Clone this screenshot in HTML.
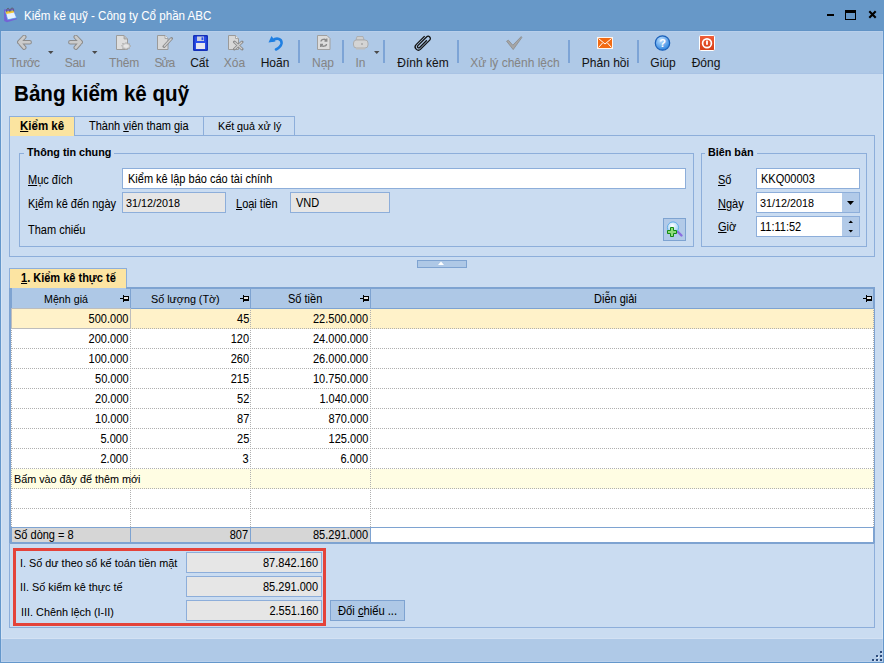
<!DOCTYPE html>
<html><head><meta charset="utf-8"><title>Bảng kiểm kê quỹ</title>
<style>
html,body{margin:0;padding:0;}
body{width:884px;height:663px;position:relative;overflow:hidden;background:#CADCF1;font-family:"Liberation Sans",sans-serif;}
.t{position:absolute;white-space:nowrap;-webkit-text-stroke:0.05px currentColor;}
.b{position:absolute;}
u{text-decoration:underline;text-underline-offset:1px;}
</style></head><body>

<div class="b" style="left:0px;top:0px;width:884px;height:31px;background:#6798C8;"></div>
<svg class="b" style="left:3px;top:6px" width="16" height="17" viewBox="0 0 16 17">
<path d="M1 3.5 L11 2.5 L13.8 13.3 L4 16.2 L1.2 15 Z" fill="#7462d6"/>
<path d="M2.4 5.6 L10.6 4.6 L13.6 11.8 L4.6 13.8 Z" fill="#e6f1ff" stroke="#4a9ee8" stroke-width="0.7"/>
<path d="M2.4 5.6 L10.6 4.6 L11.4 6.6 L3.3 8.1 Z" fill="#f4c93a"/>
<path d="M3.8 6.2 C3.2 1 6.8 1 6.3 5.8 M7.8 5.6 C7.3 0.6 10.8 0.6 10.3 5.4" fill="none" stroke="#5a5a5a" stroke-width="0.9"/>
</svg>
<div class="t" style="left:23.5px;top:9px;font-size:12.200px;line-height:14px;font-weight:normal;color:#fff;transform:scaleX(0.9508);transform-origin:0 0;">Kiểm kê quỹ - Công ty Cổ phần ABC</div>
<div class="b" style="left:827px;top:14px;width:7px;height:2px;background:#000;"></div>
<div class="b" style="left:845px;top:10px;width:11px;height:10px;background:transparent;border:1px solid #000;box-sizing:border-box;border-top-width:3px;"></div>
<svg class="b" style="left:868px;top:10px" width="9" height="9" viewBox="0 0 9 9"><path d="M1.3 1.3 L7.7 7.7 M7.7 1.3 L1.3 7.7" stroke="#000" stroke-width="2.1" stroke-linecap="butt"/></svg>
<div class="b" style="left:0px;top:31px;width:884px;height:43px;background:#AFC9E7;"></div>
<div class="b" style="left:0px;top:30px;width:884px;height:1px;background:#6193C6;"></div>
<div class="b" style="left:0px;top:31px;width:884px;height:1px;background:#B8CFEB;"></div>
<div class="b" style="left:0px;top:73px;width:884px;height:1px;background:#A9C3E4;"></div>
<div class="b" style="left:298px;top:40px;width:2px;height:23px;background:#7DA4D6;"></div>
<div class="b" style="left:342px;top:40px;width:2px;height:23px;background:#7DA4D6;"></div>
<div class="b" style="left:383px;top:40px;width:2px;height:23px;background:#7DA4D6;"></div>
<div class="b" style="left:457px;top:40px;width:2px;height:23px;background:#7DA4D6;"></div>
<div class="b" style="left:568px;top:40px;width:2px;height:23px;background:#7DA4D6;"></div>
<div class="b" style="left:637px;top:40px;width:2px;height:23px;background:#7DA4D6;"></div>
<svg class="b" style="left:48px;top:51px" width="6" height="4" viewBox="0 0 6 4"><path d="M0 0 L5.5 0 L2.75 3 Z" fill="#4a4a4a"/></svg>
<svg class="b" style="left:92px;top:51px" width="6" height="4" viewBox="0 0 6 4"><path d="M0 0 L5.5 0 L2.75 3 Z" fill="#4a4a4a"/></svg>
<svg class="b" style="left:374px;top:51px" width="6" height="4" viewBox="0 0 6 4"><path d="M0 0 L5.5 0 L2.75 3 Z" fill="#4a4a4a"/></svg>
<svg class="b" style="left:17px;top:35px" width="16" height="16" viewBox="0 0 16 16"><path d="M7.2 2 L2.3 7.2 L7.2 12.6 M2.5 7.2 L12.6 7.2" fill="none" stroke="#8c8c8c" stroke-width="4.6" stroke-linecap="round" stroke-linejoin="round"/><path d="M7.2 2 L2.3 7.2 L7.2 12.6 M2.5 7.2 L12.6 7.2" fill="none" stroke="#cbcbcb" stroke-width="2.6" stroke-linecap="round" stroke-linejoin="round"/></svg>
<svg class="b" style="left:67px;top:35px" width="16" height="16" viewBox="0 0 16 16"><g transform="translate(16,0) scale(-1,1)"><path d="M7.2 2 L2.3 7.2 L7.2 12.6 M2.5 7.2 L12.6 7.2" fill="none" stroke="#8c8c8c" stroke-width="4.6" stroke-linecap="round" stroke-linejoin="round"/><path d="M7.2 2 L2.3 7.2 L7.2 12.6 M2.5 7.2 L12.6 7.2" fill="none" stroke="#cbcbcb" stroke-width="2.6" stroke-linecap="round" stroke-linejoin="round"/></g></svg>
<svg class="b" style="left:115px;top:35px" width="17" height="16" viewBox="0 0 17 16"><path d="M1.5 0.5 L9 0.5 L12.5 4 L12.5 14.5 L1.5 14.5 Z" fill="#dedede" stroke="#9c9c9c" stroke-width="1"/><path d="M9 0.5 L9 4 L12.5 4" fill="#bbb" stroke="#9c9c9c" stroke-width="0.8"/><path d="M6.5 11 L8 9.5 L7.5 8.5 L9.5 8.8 L11 7.6 L12.5 8.8 L14.5 8.6 L14.2 10 L16 11 L14.2 12.2 L14.5 13.6 L12.5 13.5 L11 14.6 L9.5 13.5 L7.5 13.6 L8 12.4 Z" fill="#d0d0d0" stroke="#a6a6a6" stroke-width="0.7"/><ellipse cx="11.2" cy="11.1" rx="2.6" ry="1.8" fill="#e6e6e6"/></svg>
<svg class="b" style="left:157px;top:35px" width="16" height="16" viewBox="0 0 16 16"><path d="M0.5 0.5 L8 0.5 L11 3.5 L11 14.5 L0.5 14.5 Z" fill="#d8d8d8" stroke="#9a9a9a" stroke-width="1"/><path d="M8 0.5 L8 3.5 L11 3.5" fill="#eee" stroke="#9a9a9a" stroke-width="0.8"/><path d="M14.5 3.5 L7 11.5" stroke="#8a8a8a" stroke-width="3" stroke-linecap="round"/><path d="M14.5 3.5 L7 11.5" stroke="#d0d0d0" stroke-width="1.4"/></svg>
<svg class="b" style="left:193px;top:35px" width="15" height="16" viewBox="0 0 15 16"><rect x="0.75" y="0.75" width="13.5" height="14.5" rx="0.5" fill="#2a4de8" stroke="#1530b8" stroke-width="1.5"/><rect x="3" y="8" width="9" height="6" fill="#e6e6ee"/><rect x="4" y="1.5" width="7" height="4.5" fill="#c8cde0"/><rect x="8.5" y="2.3" width="1.8" height="2.8" fill="#2a4de8"/></svg>
<svg class="b" style="left:228px;top:35px" width="16" height="16" viewBox="0 0 16 16"><path d="M0.5 0.5 L7.5 0.5 L10.5 3.5 L10.5 14.5 L0.5 14.5 Z" fill="#d8d8d8" stroke="#9a9a9a" stroke-width="1"/><path d="M7.5 0.5 L7.5 3.5 L10.5 3.5" fill="#eee" stroke="#9a9a9a" stroke-width="0.8"/><path d="M6.5 7 L14 14 M14 7 L6.5 14" stroke="#8a8a8a" stroke-width="3" stroke-linecap="round"/><path d="M6.5 7 L14 14 M14 7 L6.5 14" stroke="#cfcfcf" stroke-width="1.2"/></svg>
<svg class="b" style="left:268px;top:35px" width="16" height="16" viewBox="0 0 16 16"><path d="M4.5 5.5 C9 2 14 4 13.5 8.5 C13 11 11 13 8 14.5" fill="none" stroke="#1f7fe2" stroke-width="2.6" stroke-linecap="round"/><path d="M0.5 7.5 L3.5 1 L7.5 6.5 Z" fill="#1f7fe2"/></svg>
<svg class="b" style="left:317px;top:35px" width="14" height="16" viewBox="0 0 14 16"><path d="M0.5 0.5 L10 0.5 L13 3.5 L13 14.5 L0.5 14.5 Z" fill="#dcdcdc" stroke="#a0a0a0" stroke-width="1"/><path d="M4 6.5 C4 4 8.5 3.5 9.5 5.5 M9.8 3.5 L9.8 6 L7.5 6" fill="none" stroke="#8a8a8a" stroke-width="1.3"/><path d="M9.5 9 C9.5 11.5 5 12 4 10 M3.7 12 L3.7 9.5 L6 9.5" fill="none" stroke="#8a8a8a" stroke-width="1.3"/></svg>
<svg class="b" style="left:353px;top:36px" width="16" height="14" viewBox="0 0 16 14"><path d="M4 0.5 L10 0.5 L11 4 L3 4 Z" fill="#cfcfcf" stroke="#a8a8a8" stroke-width="0.8"/><rect x="0.5" y="4" width="14.5" height="8" rx="3" fill="#d4d4d4" stroke="#a8a8a8" stroke-width="0.9"/><path d="M3 12 L12 12 L12 13.5 L3 13.5 Z" fill="#bdbdbd"/><circle cx="9" cy="8" r="0.8" fill="#888"/></svg>
<svg class="b" style="left:412px;top:33px" width="21" height="20" viewBox="0 0 21 20"><path transform="translate(10.5,9.8) rotate(45)" d="M1.3,-4.8 L1.3,5.3 A1.3 1.3 0 0 1 -1.3,5.3 L-1.3,-7 A2.25 2.25 0 0 1 3.2,-7 L3.2,5.8 A3.2 3.2 0 0 1 -3.2,5.8 L-3.2,-6.2" fill="none" stroke="#111" stroke-width="1.3"/></svg>
<svg class="b" style="left:506px;top:36px" width="17" height="15" viewBox="0 0 17 15"><path d="M0.6 5.2 L2.4 4.2 L6.8 9.2 L15.2 0.6 L15.8 1.6 L7.2 13.6 Z" fill="#a6a6a6" stroke="#8a8a8a" stroke-width="0.8" stroke-linejoin="round"/></svg>
<svg class="b" style="left:597px;top:37px" width="16" height="12" viewBox="0 0 16 12"><rect x="0.5" y="0.5" width="15" height="11" fill="#f26a12" stroke="#fff6ee" stroke-width="1"/><path d="M1.5 1.5 L8 7 L14.5 1.5 M1.5 10.5 L5.5 6 M14.5 10.5 L10.5 6" fill="none" stroke="#fff" stroke-width="1"/></svg>
<svg class="b" style="left:654px;top:35px" width="17" height="16" viewBox="0 0 17 16"><defs><radialGradient id="hg" cx="0.4" cy="0.3" r="0.7"><stop offset="0" stop-color="#bfe0ff"/><stop offset="1" stop-color="#2f86e0"/></radialGradient></defs><circle cx="8.5" cy="8" r="7.2" fill="url(#hg)" stroke="#1a5fb8" stroke-width="1.2"/><text x="8.5" y="12.3" text-anchor="middle" font-family="Liberation Sans" font-weight="bold" font-size="11" fill="#fff">?</text></svg>
<svg class="b" style="left:699px;top:35px" width="16" height="16" viewBox="0 0 16 16"><defs><linearGradient id="pg" x1="0" y1="0" x2="0" y2="1"><stop offset="0" stop-color="#f0603a"/><stop offset="1" stop-color="#d63c14"/></linearGradient></defs><rect x="0.5" y="0.5" width="15" height="15" rx="1.2" fill="url(#pg)" stroke="#fff" stroke-width="1"/><circle cx="8" cy="8.3" r="4.4" fill="none" stroke="#fff" stroke-width="1.7"/><rect x="6.6" y="5.2" width="2.8" height="5" fill="url(#pg)"/><rect x="7.1" y="5.6" width="1.8" height="4.2" fill="#fff"/></svg>
<div class="t" style="left:-125.5px;width:300px;text-align:center;top:56px;font-size:12.000px;line-height:14px;font-weight:normal;color:#858585;letter-spacing:-0.6px;">Trước</div>
<div class="t" style="left:-75px;width:300px;text-align:center;top:56px;font-size:12.000px;line-height:14px;font-weight:normal;color:#858585;letter-spacing:-0.3px;">Sau</div>
<div class="t" style="left:-26px;width:300px;text-align:center;top:56px;font-size:12.000px;line-height:14px;font-weight:normal;color:#858585;letter-spacing:-0.2px;">Thêm</div>
<div class="t" style="left:14.300000000000011px;width:300px;text-align:center;top:56px;font-size:12.000px;line-height:14px;font-weight:normal;color:#858585;letter-spacing:-1px;">Sửa</div>
<div class="t" style="left:49.5px;width:300px;text-align:center;top:56px;font-size:12.000px;line-height:14px;font-weight:normal;color:#141414;">Cất</div>
<div class="t" style="left:84.5px;width:300px;text-align:center;top:56px;font-size:12.000px;line-height:14px;font-weight:normal;color:#858585;">Xóa</div>
<div class="t" style="left:125px;width:300px;text-align:center;top:56px;font-size:12.000px;line-height:14px;font-weight:normal;color:#141414;">Hoãn</div>
<div class="t" style="left:173px;width:300px;text-align:center;top:56px;font-size:12.000px;line-height:14px;font-weight:normal;color:#858585;">Nạp</div>
<div class="t" style="left:210.5px;width:300px;text-align:center;top:56px;font-size:12.000px;line-height:14px;font-weight:normal;color:#858585;">In</div>
<div class="t" style="left:273px;width:300px;text-align:center;top:56px;font-size:12.000px;line-height:14px;font-weight:normal;color:#141414;">Đính kèm</div>
<div class="t" style="left:365px;width:300px;text-align:center;top:56px;font-size:12.000px;line-height:14px;font-weight:normal;color:#858585;">Xử lý chênh lệch</div>
<div class="t" style="left:455.5px;width:300px;text-align:center;top:56px;font-size:12.000px;line-height:14px;font-weight:normal;color:#141414;">Phản hồi</div>
<div class="t" style="left:513px;width:300px;text-align:center;top:56px;font-size:12.000px;line-height:14px;font-weight:normal;color:#141414;">Giúp</div>
<div class="t" style="left:556px;width:300px;text-align:center;top:56px;font-size:12.000px;line-height:14px;font-weight:normal;color:#141414;">Đóng</div>
<div class="t" style="left:14px;top:82px;font-size:21.500px;line-height:24px;font-weight:bold;color:#000;transform:scaleX(0.9581);transform-origin:0 0;">Bảng kiểm kê quỹ</div>
<div class="b" style="left:9px;top:135px;width:866px;height:122px;background:transparent;border:1px solid #8DAEDA;box-sizing:border-box;"></div>
<div class="b" style="left:9px;top:116px;width:66px;height:20px;background:#FBE4A0;border:1px solid #8DAEDA;box-sizing:border-box;border-bottom:none;"></div>
<div class="b" style="left:74px;top:116px;width:130px;height:20px;background:#CADCF1;border:1px solid #8DAEDA;box-sizing:border-box;"></div>
<div class="b" style="left:203px;top:116px;width:92px;height:20px;background:#CADCF1;border:1px solid #8DAEDA;box-sizing:border-box;"></div>
<div class="b" style="left:10px;top:135px;width:64px;height:1px;background:#FBE4A0;"></div>
<div class="t" style="left:20px;top:119px;font-size:12.000px;line-height:14px;font-weight:bold;color:#000;transform:scaleX(0.9583);transform-origin:0 0;"><u>K</u>iểm kê</div>
<div class="t" style="left:89px;top:119px;font-size:12.000px;line-height:14px;font-weight:normal;color:#000;transform:scaleX(0.9167);transform-origin:0 0;">Thành <u>v</u>iên tham gia</div>
<div class="t" style="left:218px;top:119px;font-size:11.727px;line-height:14px;font-weight:normal;color:#000;transform:scaleX(0.9167);transform-origin:0 0;">Kết <u>q</u>uả xử lý</div>
<div class="b" style="left:19px;top:153px;width:675px;height:94px;background:transparent;border:1px solid #8DAEDA;box-sizing:border-box;"></div>
<div class="b" style="left:24px;top:146px;width:90px;height:12px;background:#CADCF1;"></div>
<div class="t" style="left:26.5px;top:145px;font-size:11.760px;line-height:14px;font-weight:bold;color:#000;transform:scaleX(0.9167);transform-origin:0 0;">Thông tin chung</div>
<div class="b" style="left:701px;top:153px;width:166px;height:94px;background:transparent;border:1px solid #8DAEDA;box-sizing:border-box;"></div>
<div class="b" style="left:705px;top:146px;width:52px;height:12px;background:#CADCF1;"></div>
<div class="t" style="left:707.5px;top:145px;font-size:11.760px;line-height:14px;font-weight:bold;color:#000;transform:scaleX(0.9167);transform-origin:0 0;">Biên bản</div>
<div class="t" style="left:28.4px;top:173px;font-size:12.000px;line-height:14px;font-weight:normal;color:#000;transform:scaleX(0.9167);transform-origin:0 0;"><u>M</u>ục đích</div>
<div class="b" style="left:122px;top:168px;width:564px;height:21px;background:#fff;border:1px solid #8DAEDA;box-sizing:border-box;"></div>
<div class="t" style="left:127.6px;top:172px;font-size:12.000px;line-height:14px;font-weight:normal;color:#000;transform:scaleX(0.9167);transform-origin:0 0;">Kiểm kê lập báo cáo tài chính</div>
<div class="t" style="left:28.4px;top:197px;font-size:12.000px;line-height:14px;font-weight:normal;color:#000;transform:scaleX(0.9167);transform-origin:0 0;">K<u>i</u>ểm kê đến ngày</div>
<div class="b" style="left:122px;top:192px;width:104px;height:21px;background:#E6E6E6;border:1px solid #8DAEDA;box-sizing:border-box;"></div>
<div class="t" style="left:126px;top:196px;font-size:11.782px;line-height:14px;font-weight:normal;color:#000;transform:scaleX(0.9167);transform-origin:0 0;">31/12/2018</div>
<div class="t" style="left:236px;top:197px;font-size:12.000px;line-height:14px;font-weight:normal;color:#000;transform:scaleX(0.9167);transform-origin:0 0;"><u>L</u>oại tiền</div>
<div class="b" style="left:290px;top:192px;width:100px;height:21px;background:#E6E6E6;border:1px solid #8DAEDA;box-sizing:border-box;"></div>
<div class="t" style="left:296px;top:196px;font-size:12.000px;line-height:14px;font-weight:normal;color:#000;transform:scaleX(0.9167);transform-origin:0 0;">VND</div>
<div class="t" style="left:28.4px;top:223px;font-size:12.000px;line-height:14px;font-weight:normal;color:#000;transform:scaleX(0.9167);transform-origin:0 0;">Tham chiếu</div>
<div class="b" style="left:663px;top:218px;width:23px;height:23px;background:#B2CAE8;border:1px solid #7EA3D1;box-sizing:border-box;"></div>
<svg class="b" style="left:663px;top:218px" width="23" height="23" viewBox="0 0 23 23"><defs><radialGradient id="mg" cx="0.45" cy="0.35" r="0.6"><stop offset="0" stop-color="#ffffff"/><stop offset="1" stop-color="#9fd0f2"/></radialGradient></defs><path d="M14.5 13.5 L18.5 17.5" stroke="#8a6ee0" stroke-width="2.4" stroke-linecap="round"/><circle cx="10" cy="9.5" r="5.6" fill="url(#mg)" stroke="#62aee8" stroke-width="1"/><path d="M7.5,9.5 H10.5 V12.5 H13.5 V15.5 H10.5 V18.5 H7.5 V15.5 H4.5 V12.5 H7.5 Z" fill="#8fdc78" stroke="#138a13" stroke-width="1"/></svg>
<div class="t" style="left:718px;top:173px;font-size:12.000px;line-height:14px;font-weight:normal;color:#000;transform:scaleX(0.9167);transform-origin:0 0;"><u>S</u>ố</div>
<div class="b" style="left:756px;top:168px;width:104px;height:21px;background:#fff;border:1px solid #8DAEDA;box-sizing:border-box;"></div>
<div class="t" style="left:761px;top:172px;font-size:12.000px;line-height:14px;font-weight:normal;color:#000;transform:scaleX(0.9167);transform-origin:0 0;">KKQ00003</div>
<div class="t" style="left:718px;top:197px;font-size:12.000px;line-height:14px;font-weight:normal;color:#000;transform:scaleX(0.9167);transform-origin:0 0;"><u>N</u>gày</div>
<div class="b" style="left:756px;top:192px;width:104px;height:21px;background:#fff;border:1px solid #8DAEDA;box-sizing:border-box;"></div>
<div class="b" style="left:842px;top:193px;width:17px;height:19px;background:#B2CAE8;"></div>
<svg class="b" style="left:847px;top:201px" width="8" height="5" viewBox="0 0 8 5"><path d="M0 0 L7 0 L3.5 4 Z" fill="#000"/></svg>
<div class="t" style="left:760px;top:196px;font-size:11.782px;line-height:14px;font-weight:normal;color:#000;transform:scaleX(0.9167);transform-origin:0 0;">31/12/2018</div>
<div class="t" style="left:718px;top:220px;font-size:12.000px;line-height:14px;font-weight:normal;color:#000;transform:scaleX(0.9167);transform-origin:0 0;"><u>G</u>iờ</div>
<div class="b" style="left:756px;top:216px;width:104px;height:21px;background:#fff;border:1px solid #8DAEDA;box-sizing:border-box;"></div>
<div class="b" style="left:842px;top:217px;width:17px;height:19px;background:#B2CAE8;"></div>
<svg class="b" style="left:848px;top:220px" width="6" height="14" viewBox="0 0 6 14"><path d="M0.5 3 L5 3 L2.75 0.5 Z M0.5 10 L5 10 L2.75 12.5 Z" fill="#000"/></svg>
<div class="t" style="left:760px;top:220px;font-size:12.000px;line-height:14px;font-weight:normal;color:#000;transform:scaleX(0.9167);transform-origin:0 0;">11:11:52</div>
<div class="b" style="left:417px;top:260px;width:50px;height:8px;background:#AEC8E6;border:1px solid #7EA3D1;box-sizing:border-box;"></div>
<svg class="b" style="left:438px;top:261px" width="7" height="5" viewBox="0 0 7 5"><path d="M0 4 L6 4 L3 0.5 Z" fill="#fff"/></svg>
<div class="b" style="left:9px;top:268px;width:118px;height:21px;background:#FCE4A2;border:1px solid #8DAEDA;box-sizing:border-box;border-bottom:none;"></div>
<div class="t" style="left:21px;top:271px;font-size:12.000px;line-height:14px;font-weight:bold;color:#000;transform:scaleX(0.9167);transform-origin:0 0;"><u>1</u>. Kiểm kê thực tế</div>
<div class="b" style="left:11px;top:288px;width:862px;height:20px;background:#AEC8E6;"></div>
<div class="b" style="left:126px;top:287px;width:749px;height:2px;background:#7EA3D1;"></div>
<div class="b" style="left:9px;top:288px;width:3px;height:21px;background:#7EA3D1;"></div>
<div class="b" style="left:9px;top:309px;width:2px;height:235px;background:#7EA3D1;"></div>
<div class="b" style="left:873px;top:287px;width:2px;height:22px;background:#7EA3D1;"></div>
<div class="b" style="left:874px;top:309px;width:1px;height:235px;background:#7EA3D1;"></div>
<div class="b" style="left:11px;top:308px;width:862px;height:1px;background:#7EA3D1;"></div>
<div class="b" style="left:130px;top:289px;width:1px;height:19px;background:#7EA3D1;"></div>
<div class="b" style="left:250px;top:289px;width:1px;height:19px;background:#7EA3D1;"></div>
<div class="b" style="left:370px;top:289px;width:1px;height:19px;background:#7EA3D1;"></div>
<div class="b" style="left:120px;top:298px;width:3px;height:1px;background:#000;"></div>
<div class="b" style="left:123px;top:295px;width:1px;height:7px;background:#000;"></div>
<div class="b" style="left:124px;top:296px;width:5px;height:5px;background:#E4E4E4;border:1px solid #000;box-sizing:border-box;border-bottom-width:2px;border-left:none;"></div>
<div class="b" style="left:240px;top:298px;width:3px;height:1px;background:#000;"></div>
<div class="b" style="left:243px;top:295px;width:1px;height:7px;background:#000;"></div>
<div class="b" style="left:244px;top:296px;width:5px;height:5px;background:#E4E4E4;border:1px solid #000;box-sizing:border-box;border-bottom-width:2px;border-left:none;"></div>
<div class="b" style="left:360px;top:298px;width:3px;height:1px;background:#000;"></div>
<div class="b" style="left:363px;top:295px;width:1px;height:7px;background:#000;"></div>
<div class="b" style="left:364px;top:296px;width:5px;height:5px;background:#E4E4E4;border:1px solid #000;box-sizing:border-box;border-bottom-width:2px;border-left:none;"></div>
<div class="b" style="left:863px;top:298px;width:3px;height:1px;background:#000;"></div>
<div class="b" style="left:866px;top:295px;width:1px;height:7px;background:#000;"></div>
<div class="b" style="left:867px;top:296px;width:5px;height:5px;background:#E4E4E4;border:1px solid #000;box-sizing:border-box;border-bottom-width:2px;border-left:none;"></div>
<div class="t" style="left:43.5px;top:292px;font-size:11.673px;line-height:14px;font-weight:normal;color:#000;transform:scaleX(0.9167);transform-origin:0 0;">Mệnh giá</div>
<div class="t" style="left:151.2px;top:292px;font-size:11.782px;line-height:14px;font-weight:normal;color:#000;transform:scaleX(0.9167);transform-origin:0 0;">Số lượng (Tờ)</div>
<div class="t" style="left:288.4px;top:292px;font-size:12.000px;line-height:14px;font-weight:normal;color:#000;transform:scaleX(0.9167);transform-origin:0 0;">Số tiền</div>
<div class="t" style="left:594px;top:292px;font-size:12.000px;line-height:14px;font-weight:normal;color:#000;transform:scaleX(0.9167);transform-origin:0 0;">Diễn giải</div>
<div class="b" style="left:11px;top:309px;width:863px;height:20px;background:#FFF2C9;"></div>
<div class="b" style="left:12px;top:328px;width:862px;height:1px;background:transparent;background:repeating-linear-gradient(to right,#b0b0b0 0,#b0b0b0 1px,transparent 1px,transparent 2px);"></div>
<div class="b" style="left:11px;top:329px;width:863px;height:20px;background:#fff;"></div>
<div class="b" style="left:12px;top:348px;width:862px;height:1px;background:transparent;background:repeating-linear-gradient(to right,#b0b0b0 0,#b0b0b0 1px,transparent 1px,transparent 2px);"></div>
<div class="b" style="left:11px;top:349px;width:863px;height:20px;background:#fff;"></div>
<div class="b" style="left:12px;top:368px;width:862px;height:1px;background:transparent;background:repeating-linear-gradient(to right,#b0b0b0 0,#b0b0b0 1px,transparent 1px,transparent 2px);"></div>
<div class="b" style="left:11px;top:369px;width:863px;height:20px;background:#fff;"></div>
<div class="b" style="left:12px;top:388px;width:862px;height:1px;background:transparent;background:repeating-linear-gradient(to right,#b0b0b0 0,#b0b0b0 1px,transparent 1px,transparent 2px);"></div>
<div class="b" style="left:11px;top:389px;width:863px;height:20px;background:#fff;"></div>
<div class="b" style="left:12px;top:408px;width:862px;height:1px;background:transparent;background:repeating-linear-gradient(to right,#b0b0b0 0,#b0b0b0 1px,transparent 1px,transparent 2px);"></div>
<div class="b" style="left:11px;top:409px;width:863px;height:20px;background:#fff;"></div>
<div class="b" style="left:12px;top:428px;width:862px;height:1px;background:transparent;background:repeating-linear-gradient(to right,#b0b0b0 0,#b0b0b0 1px,transparent 1px,transparent 2px);"></div>
<div class="b" style="left:11px;top:429px;width:863px;height:20px;background:#fff;"></div>
<div class="b" style="left:12px;top:448px;width:862px;height:1px;background:transparent;background:repeating-linear-gradient(to right,#b0b0b0 0,#b0b0b0 1px,transparent 1px,transparent 2px);"></div>
<div class="b" style="left:11px;top:449px;width:863px;height:20px;background:#fff;"></div>
<div class="b" style="left:12px;top:468px;width:862px;height:1px;background:transparent;background:repeating-linear-gradient(to right,#b0b0b0 0,#b0b0b0 1px,transparent 1px,transparent 2px);"></div>
<div class="b" style="left:11px;top:469px;width:863px;height:20px;background:#FFFDE3;"></div>
<div class="b" style="left:12px;top:488px;width:862px;height:1px;background:transparent;background:repeating-linear-gradient(to right,#b0b0b0 0,#b0b0b0 1px,transparent 1px,transparent 2px);"></div>
<div class="b" style="left:11px;top:489px;width:863px;height:20px;background:#fff;"></div>
<div class="b" style="left:12px;top:508px;width:862px;height:1px;background:transparent;background:repeating-linear-gradient(to right,#b0b0b0 0,#b0b0b0 1px,transparent 1px,transparent 2px);"></div>
<div class="b" style="left:11px;top:509px;width:863px;height:20px;background:#fff;"></div>
<div class="b" style="left:12px;top:528px;width:862px;height:1px;background:transparent;background:repeating-linear-gradient(to right,#b0b0b0 0,#b0b0b0 1px,transparent 1px,transparent 2px);"></div>
<div class="b" style="left:11px;top:310px;width:1px;height:217px;background:transparent;background:repeating-linear-gradient(to bottom,#b0b0b0 0,#b0b0b0 1px,transparent 1px,transparent 2px);"></div>
<div class="b" style="left:130px;top:310px;width:1px;height:217px;background:transparent;background:repeating-linear-gradient(to bottom,#b0b0b0 0,#b0b0b0 1px,transparent 1px,transparent 2px);"></div>
<div class="b" style="left:250px;top:310px;width:1px;height:217px;background:transparent;background:repeating-linear-gradient(to bottom,#b0b0b0 0,#b0b0b0 1px,transparent 1px,transparent 2px);"></div>
<div class="b" style="left:370px;top:310px;width:1px;height:217px;background:transparent;background:repeating-linear-gradient(to bottom,#b0b0b0 0,#b0b0b0 1px,transparent 1px,transparent 2px);"></div>
<div class="b" style="left:873px;top:310px;width:1px;height:217px;background:transparent;background:repeating-linear-gradient(to bottom,#b0b0b0 0,#b0b0b0 1px,transparent 1px,transparent 2px);"></div>
<div class="b" style="left:11px;top:308px;width:120px;height:21px;background:transparent;border:1px solid #BDBDBD;box-sizing:border-box;"></div>
<div class="t" style="right:755.5px;text-align:right;top:312px;font-size:12.000px;line-height:14px;font-weight:normal;color:#000;transform:scaleX(0.9167);transform-origin:100% 0;">500.000</div>
<div class="t" style="right:635px;text-align:right;top:312px;font-size:12.000px;line-height:14px;font-weight:normal;color:#000;transform:scaleX(0.9167);transform-origin:100% 0;">45</div>
<div class="t" style="right:516px;text-align:right;top:312px;font-size:12.000px;line-height:14px;font-weight:normal;color:#000;transform:scaleX(0.9167);transform-origin:100% 0;">22.500.000</div>
<div class="t" style="right:755.5px;text-align:right;top:332px;font-size:12.000px;line-height:14px;font-weight:normal;color:#000;transform:scaleX(0.9167);transform-origin:100% 0;">200.000</div>
<div class="t" style="right:635px;text-align:right;top:332px;font-size:12.000px;line-height:14px;font-weight:normal;color:#000;transform:scaleX(0.9167);transform-origin:100% 0;">120</div>
<div class="t" style="right:516px;text-align:right;top:332px;font-size:12.000px;line-height:14px;font-weight:normal;color:#000;transform:scaleX(0.9167);transform-origin:100% 0;">24.000.000</div>
<div class="t" style="right:755.5px;text-align:right;top:352px;font-size:12.000px;line-height:14px;font-weight:normal;color:#000;transform:scaleX(0.9167);transform-origin:100% 0;">100.000</div>
<div class="t" style="right:635px;text-align:right;top:352px;font-size:12.000px;line-height:14px;font-weight:normal;color:#000;transform:scaleX(0.9167);transform-origin:100% 0;">260</div>
<div class="t" style="right:516px;text-align:right;top:352px;font-size:12.000px;line-height:14px;font-weight:normal;color:#000;transform:scaleX(0.9167);transform-origin:100% 0;">26.000.000</div>
<div class="t" style="right:755.5px;text-align:right;top:372px;font-size:12.000px;line-height:14px;font-weight:normal;color:#000;transform:scaleX(0.9167);transform-origin:100% 0;">50.000</div>
<div class="t" style="right:635px;text-align:right;top:372px;font-size:12.000px;line-height:14px;font-weight:normal;color:#000;transform:scaleX(0.9167);transform-origin:100% 0;">215</div>
<div class="t" style="right:516px;text-align:right;top:372px;font-size:12.000px;line-height:14px;font-weight:normal;color:#000;transform:scaleX(0.9167);transform-origin:100% 0;">10.750.000</div>
<div class="t" style="right:755.5px;text-align:right;top:392px;font-size:12.000px;line-height:14px;font-weight:normal;color:#000;transform:scaleX(0.9167);transform-origin:100% 0;">20.000</div>
<div class="t" style="right:635px;text-align:right;top:392px;font-size:12.000px;line-height:14px;font-weight:normal;color:#000;transform:scaleX(0.9167);transform-origin:100% 0;">52</div>
<div class="t" style="right:516px;text-align:right;top:392px;font-size:12.000px;line-height:14px;font-weight:normal;color:#000;transform:scaleX(0.9167);transform-origin:100% 0;">1.040.000</div>
<div class="t" style="right:755.5px;text-align:right;top:412px;font-size:12.000px;line-height:14px;font-weight:normal;color:#000;transform:scaleX(0.9167);transform-origin:100% 0;">10.000</div>
<div class="t" style="right:635px;text-align:right;top:412px;font-size:12.000px;line-height:14px;font-weight:normal;color:#000;transform:scaleX(0.9167);transform-origin:100% 0;">87</div>
<div class="t" style="right:516px;text-align:right;top:412px;font-size:12.000px;line-height:14px;font-weight:normal;color:#000;transform:scaleX(0.9167);transform-origin:100% 0;">870.000</div>
<div class="t" style="right:755.5px;text-align:right;top:432px;font-size:12.000px;line-height:14px;font-weight:normal;color:#000;transform:scaleX(0.9167);transform-origin:100% 0;">5.000</div>
<div class="t" style="right:635px;text-align:right;top:432px;font-size:12.000px;line-height:14px;font-weight:normal;color:#000;transform:scaleX(0.9167);transform-origin:100% 0;">25</div>
<div class="t" style="right:516px;text-align:right;top:432px;font-size:12.000px;line-height:14px;font-weight:normal;color:#000;transform:scaleX(0.9167);transform-origin:100% 0;">125.000</div>
<div class="t" style="right:755.5px;text-align:right;top:452px;font-size:12.000px;line-height:14px;font-weight:normal;color:#000;transform:scaleX(0.9167);transform-origin:100% 0;">2.000</div>
<div class="t" style="right:635px;text-align:right;top:452px;font-size:12.000px;line-height:14px;font-weight:normal;color:#000;transform:scaleX(0.9167);transform-origin:100% 0;">3</div>
<div class="t" style="right:516px;text-align:right;top:452px;font-size:12.000px;line-height:14px;font-weight:normal;color:#000;transform:scaleX(0.9167);transform-origin:100% 0;">6.000</div>
<div class="t" style="left:14px;top:472px;font-size:11.782px;line-height:14px;font-weight:normal;color:#000;transform:scaleX(0.9167);transform-origin:0 0;">Bấm vào đây để thêm mới</div>
<div class="b" style="left:12px;top:527px;width:861px;height:1px;background:#7EA3D1;"></div>
<div class="b" style="left:12px;top:528px;width:358px;height:14px;background:#D6D6D6;"></div>
<div class="b" style="left:371px;top:528px;width:502px;height:14px;background:#fff;"></div>
<div class="b" style="left:130px;top:528px;width:1px;height:14px;background:#7EA3D1;"></div>
<div class="b" style="left:250px;top:528px;width:1px;height:14px;background:#7EA3D1;"></div>
<div class="b" style="left:370px;top:528px;width:1px;height:14px;background:#7EA3D1;"></div>
<div class="b" style="left:9px;top:527px;width:3px;height:15px;background:#7EA3D1;"></div>
<div class="b" style="left:873px;top:527px;width:2px;height:15px;background:#7EA3D1;"></div>
<div class="b" style="left:9px;top:542px;width:866px;height:2px;background:#7EA3D1;"></div>
<div class="t" style="left:14px;top:528px;font-size:12.000px;line-height:14px;font-weight:normal;color:#000;transform:scaleX(0.9167);transform-origin:0 0;">Số dòng = 8</div>
<div class="t" style="right:636px;text-align:right;top:528px;font-size:12.000px;line-height:14px;font-weight:normal;color:#000;transform:scaleX(0.9167);transform-origin:100% 0;">807</div>
<div class="t" style="right:516px;text-align:right;top:528px;font-size:12.000px;line-height:14px;font-weight:normal;color:#000;transform:scaleX(0.9167);transform-origin:100% 0;">85.291.000</div>
<div class="b" style="left:9px;top:543px;width:866px;height:85px;background:transparent;border:1px solid #8DAEDA;box-sizing:border-box;border-top:none;"></div>
<div class="b" style="left:13px;top:548px;width:313px;height:78px;background:transparent;border:3px solid #E4433A;box-sizing:border-box;"></div>
<div class="t" style="left:19.5px;top:556px;font-size:11.836px;line-height:14px;font-weight:normal;color:#000;transform:scaleX(0.9167);transform-origin:0 0;">I. Số dư theo sổ kế toán tiền mặt</div>
<div class="b" style="left:186px;top:552px;width:136px;height:21px;background:#E6E6E6;border:1px solid #8DAEDA;box-sizing:border-box;"></div>
<div class="t" style="right:565.5px;text-align:right;top:556px;font-size:12.000px;line-height:14px;font-weight:normal;color:#000;transform:scaleX(0.9167);transform-origin:100% 0;">87.842.160</div>
<div class="t" style="left:19.5px;top:580px;font-size:11.836px;line-height:14px;font-weight:normal;color:#000;transform:scaleX(0.9167);transform-origin:0 0;">II. Số kiểm kê thực tế</div>
<div class="b" style="left:186px;top:576px;width:136px;height:21px;background:#E6E6E6;border:1px solid #8DAEDA;box-sizing:border-box;"></div>
<div class="t" style="right:565.5px;text-align:right;top:580px;font-size:12.000px;line-height:14px;font-weight:normal;color:#000;transform:scaleX(0.9167);transform-origin:100% 0;">85.291.000</div>
<div class="t" style="left:20.5px;top:605px;font-size:11.836px;line-height:14px;font-weight:normal;color:#000;transform:scaleX(0.9167);transform-origin:0 0;">III. Chênh lệch (I-II)</div>
<div class="b" style="left:186px;top:600px;width:136px;height:21px;background:#E6E6E6;border:1px solid #8DAEDA;box-sizing:border-box;"></div>
<div class="t" style="right:565.5px;text-align:right;top:604px;font-size:12.000px;line-height:14px;font-weight:normal;color:#000;transform:scaleX(0.9167);transform-origin:100% 0;">2.551.160</div>
<div class="b" style="left:330px;top:600px;width:75px;height:21px;background:#AEC8E6;border:1px solid #7EA3D1;box-sizing:border-box;"></div>
<div class="t" style="left:337.5px;top:604px;font-size:12.218px;line-height:14px;font-weight:normal;color:#000;transform:scaleX(0.9167);transform-origin:0 0;">Đối <u>c</u>hiếu ...</div>
<div class="b" style="left:0px;top:639px;width:884px;height:24px;background:#AFC9E7;"></div>
<div class="b" style="left:1px;top:638px;width:882px;height:1px;background:#D3E1F3;"></div>
<div class="b" style="left:881px;top:652px;width:2px;height:2px;background:#D8E6F6;"></div>
<div class="b" style="left:880px;top:651px;width:2px;height:2px;background:#2E4C7C;"></div>
<div class="b" style="left:877px;top:656px;width:2px;height:2px;background:#D8E6F6;"></div>
<div class="b" style="left:876px;top:655px;width:2px;height:2px;background:#2E4C7C;"></div>
<div class="b" style="left:881px;top:656px;width:2px;height:2px;background:#D8E6F6;"></div>
<div class="b" style="left:880px;top:655px;width:2px;height:2px;background:#2E4C7C;"></div>
<div class="b" style="left:873px;top:660px;width:2px;height:2px;background:#D8E6F6;"></div>
<div class="b" style="left:872px;top:659px;width:2px;height:2px;background:#2E4C7C;"></div>
<div class="b" style="left:877px;top:660px;width:2px;height:2px;background:#D8E6F6;"></div>
<div class="b" style="left:876px;top:659px;width:2px;height:2px;background:#2E4C7C;"></div>
<div class="b" style="left:881px;top:660px;width:2px;height:2px;background:#D8E6F6;"></div>
<div class="b" style="left:880px;top:659px;width:2px;height:2px;background:#2E4C7C;"></div>
<div class="b" style="left:1px;top:74px;width:1px;height:564px;background:#D6E4F4;"></div>
<div class="b" style="left:882px;top:74px;width:1px;height:564px;background:#D6E4F4;"></div>
<div class="b" style="left:1px;top:32px;width:1px;height:41px;background:#B4CCEA;"></div>
<div class="b" style="left:882px;top:32px;width:1px;height:41px;background:#B4CCEA;"></div>
<div class="b" style="left:1px;top:639px;width:1px;height:23px;background:#B9D0EC;"></div>
<div class="b" style="left:882px;top:639px;width:1px;height:23px;background:#B9D0EC;"></div>
<div class="b" style="left:1px;top:661px;width:882px;height:1px;background:#B9D0EC;"></div>
<div class="b" style="left:0px;top:31px;width:1px;height:632px;background:#6497CB;"></div>
<div class="b" style="left:883px;top:31px;width:1px;height:632px;background:#6497CB;"></div>
<div class="b" style="left:0px;top:662px;width:884px;height:1px;background:#6497CB;"></div>
</body></html>
